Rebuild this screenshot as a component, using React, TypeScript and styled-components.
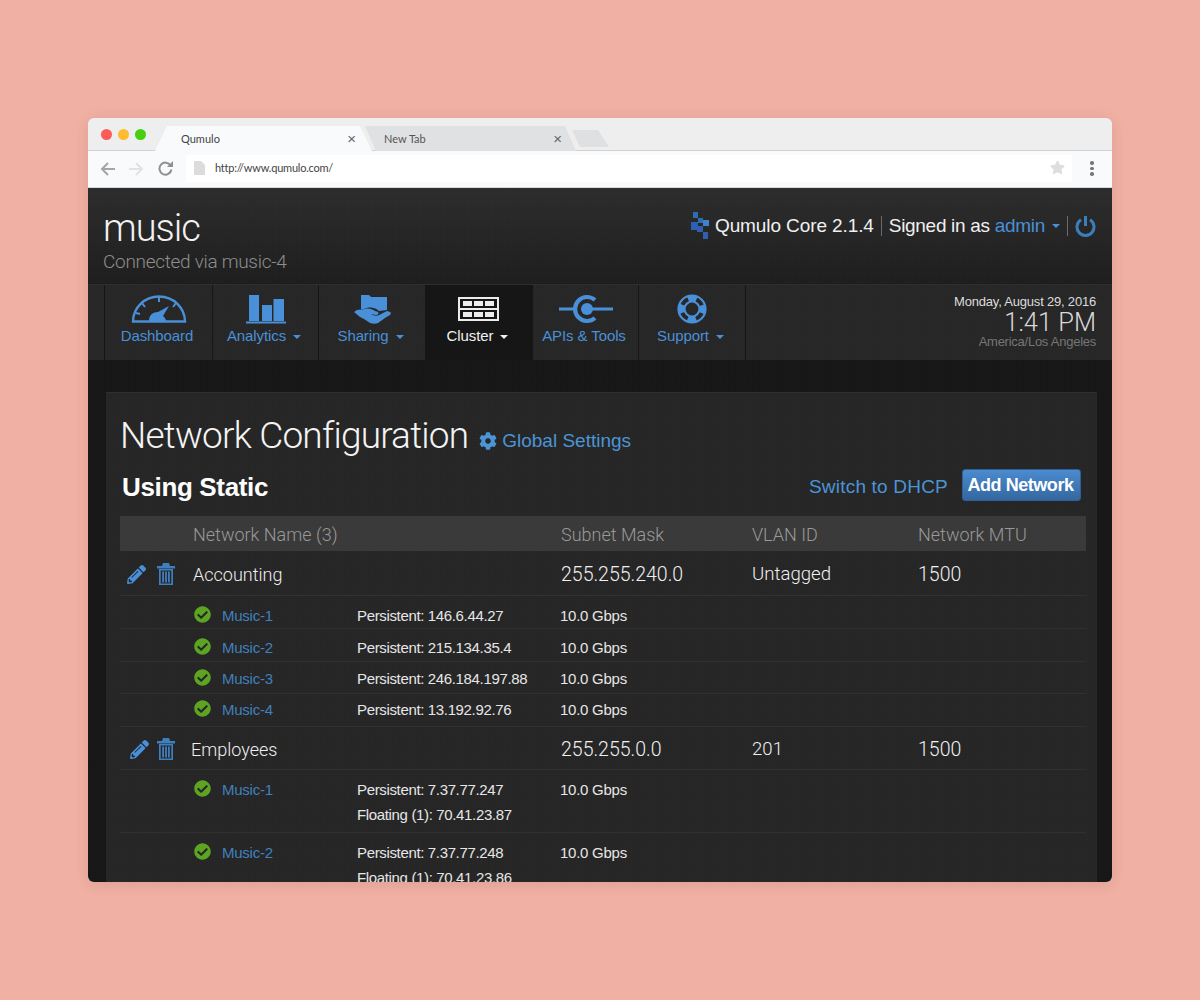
import React from "react";
import styled, { createGlobalStyle } from "styled-components";
import { FaCog, FaCheckCircle, FaPencilAlt, FaStar } from "react-icons/fa";

const Global = createGlobalStyle`
  html, body { margin: 0; height: 100%; background: #f0b0a3; }
  body { font-family: Roboto, "Liberation Sans", sans-serif; }
  * { box-sizing: border-box; }
`;

const BLUE = "#4a90d9";
const WEAVE = `repeating-linear-gradient(90deg, rgba(255,255,255,0.006) 0 1px, transparent 1px 3px), repeating-linear-gradient(0deg, rgba(0,0,0,0.025) 0 1px, transparent 1px 3px)`;

const Page = styled.div`
  height: 1000px;
  padding-top: 118px;
`;
const Window = styled.div`
  width: 1024px;
  height: 764px;
  margin: 0 auto;
  border-radius: 6px;
  overflow: hidden;
  display: flex;
  flex-direction: column;
  box-shadow: 0 2px 14px rgba(90, 40, 30, 0.12);
`;

/* Browser chrome */
const TabStrip = styled.div`
  height: 33px;
  flex: none;
  display: flex;
  align-items: flex-end;
  background: #eeeeee;
  border-bottom: 1px solid #d2d2d2;
  padding-left: 13px;
`;
const Lights = styled.div`
  display: flex;
  gap: 6px;
  align-self: flex-start;
  margin-top: 11px;
  margin-right: 9px;
`;
const Light = styled.span<{ $c: string }>`
  width: 11px;
  height: 11px;
  border-radius: 50%;
  background: ${(p) => p.$c};
`;
const ActiveTab = styled.div`
  position: relative;
  z-index: 1;
  width: 217px;
  height: 25px;
  margin-bottom: -1px;
  clip-path: polygon(0 100%, 12px 0, calc(100% - 12px) 0, 100% 100%);
  background: #f9fafc;
  display: flex;
  align-items: center;
  justify-content: space-between;
  padding: 0 16px 0 26px;
  font: 400 11px "Lato", sans-serif;
  color: #444;
`;
const InactiveTab = styled.div`
  width: 211px;
  height: 25px;
  margin-left: -7px;
  margin-bottom: -1px;
  clip-path: polygon(11px 100%, 0 0, calc(100% - 11px) 0, 100% 100%);
  background: #e0e1e3;
  display: flex;
  align-items: center;
  justify-content: space-between;
  padding: 0 14px 0 19px;
  font: 400 11px "Lato", sans-serif;
  color: #555;
`;
const TabClose = styled.span`
  font: 400 15px "Liberation Sans", sans-serif;
  color: #666;
  line-height: 1;
`;
const NewTab = styled.div`
  width: 37px;
  height: 17px;
  margin: 0 0 3px -4px;
  background: #dfe0e2;
  clip-path: polygon(0 0, 26px 0, 100% 100%, 8px 100%);
`;
const Toolbar = styled.div`
  height: 37px;
  flex: none;
  background: #f9fafc;
  border-bottom: 1px solid #d8d8d8;
  display: flex;
  align-items: center;
  padding: 0 0 1px 12px;
`;
const NavIcons = styled.div`
  display: flex;
  gap: 14px;
  width: 86px;
  align-items: center;
`;
const UrlBar = styled.div`
  width: 886px;
  height: 27px;
  background: #fff;
  display: flex;
  align-items: center;
  padding: 0 7px 2px 8px;
  font: 400 11px "Lato", sans-serif;
  letter-spacing: -0.22px;
  color: #444;
  gap: 10px;
`;
const UrlText = styled.span`
  flex: 1;
`;
const Menu = styled.div`
  margin-left: 18px;
  display: flex;
  flex-direction: column;
  gap: 2px;
`;
const MenuDot = styled.span`
  width: 3.5px;
  height: 3.5px;
  border-radius: 50%;
  background: #777;
`;

/* App header */
const App_ = styled.div`
  flex: 1;
  min-height: 0;
  background: ${WEAVE}, #171717;
  overflow: hidden;
`;
const Header = styled.div`
  height: 96px;
  padding: 19px 16px 0 15px;
  display: flex;
  justify-content: space-between;
  background: ${WEAVE}, linear-gradient(#2d2d2d, #1e1e1e);
`;
const ClusterName = styled.div`
  font-weight: 300;
  font-size: 38px;
  line-height: 42px;
  color: #f2f2f2;
  letter-spacing: -1px;
`;
const Connected = styled.div`
  font-weight: 300;
  font-size: 19px;
  line-height: 24px;
  margin-top: 1px;
  letter-spacing: -0.3px;
  color: #8e8e8e;
`;
const HeaderRight = styled.div`
  display: flex;
  align-items: center;
  height: 38px;
  font: 400 19px "Liberation Sans", sans-serif;
  letter-spacing: -0.1px;
  color: #f0f0f0;
`;
const SignedIn = styled.span`
  letter-spacing: -0.3px;
  white-space: pre;
`;
const Sep = styled.span`
  width: 1px;
  height: 20px;
  background: #6a6a6a;
  margin: 0 7px;
`;
const AdminLink = styled.span`
  color: ${BLUE};
`;
const Caret = styled.span<{ $c?: string }>`
  display: inline-block;
  width: 0;
  height: 0;
  margin-left: 7px;
  border-left: 4px solid transparent;
  border-right: 4px solid transparent;
  border-top: 4px solid ${(p) => p.$c ?? BLUE};
  vertical-align: middle;
`;

/* Main nav */
const NavBar = styled.div`
  height: 76px;
  background: ${WEAVE}, #272727;
  display: flex;
  padding-left: 16px;
  border-top: 1px solid #2e2e2e;
`;
const NavItem = styled.div<{ $w: number; $active?: boolean }>`
  width: ${(p) => p.$w}px;
  border-left: 1px solid #161616;
  background: ${(p) => (p.$active ? "#161616" : "transparent")};
  color: ${(p) => (p.$active ? "#f0f0f0" : BLUE)};
  display: flex;
  flex-direction: column;
  align-items: center;
  padding-top: 8px;
  font: 400 15px "Liberation Sans", sans-serif;
  letter-spacing: -0.1px;
`;
const NavIcon = styled.div`
  height: 32px;
  display: flex;
  align-items: center;
  justify-content: center;
`;
const NavLabel = styled.div`
  margin-top: 1px;
  margin-right: 3px;
  line-height: 20px;
  white-space: nowrap;
`;
const NavEnd = styled.div`
  border-left: 1px solid #161616;
`;
const Clock = styled.div`
  margin-left: auto;
  padding: 9px 16px 0 0;
  text-align: right;
  font-family: "Liberation Sans", sans-serif;
`;
const ClockDate = styled.div`
  font-size: 13px;
  line-height: 15px;
  letter-spacing: -0.2px;
  color: #dcdcdc;
`;
const ClockTime = styled.div`
  font: 300 25.5px/26px Roboto, sans-serif;
  color: #d8d8d8;
`;
const ClockZone = styled.div`
  font-size: 13px;
  line-height: 14px;
  letter-spacing: -0.25px;
  color: #767676;
`;

/* Content */
const Content = styled.div`
  padding: 32px 15px 0 18px;
`;
const Panel = styled.div`
  background: ${WEAVE}, #262626;
  border-top: 1px solid #2f2f2f;
  padding: 20px 11px 0 14px;
  height: 600px;
`;
const TitleRow = styled.div`
  display: flex;
  align-items: flex-start;
  gap: 11px;
  height: 46px;
`;
const Title = styled.h1`
  margin: 0;
  font-weight: 300;
  font-size: 37px;
  line-height: 46px;
  color: #f4f4f4;
  letter-spacing: -0.8px;
`;
const GlobalLink = styled.a`
  display: inline-flex;
  align-items: center;
  gap: 5px;
  margin-top: 17px;
  color: #4b94d6;
  font: 400 19px/22px "Liberation Sans", sans-serif;
`;
const ActionRow = styled.div`
  display: flex;
  align-items: center;
  margin-top: 10px;
  height: 32px;
  padding: 0 5px 0 2px;
`;
const Using = styled.h2`
  margin: 4px 0 0;
  flex: 1;
  font: 700 26px "Liberation Sans", sans-serif;
  letter-spacing: -0.35px;
  color: #fff;
`;
const SwitchLink = styled.a`
  color: #4b94d6;
  font: 400 19px "Liberation Sans", sans-serif;
  letter-spacing: 0.2px;
  margin: 4px 14px 0 0;
`;
const AddButton = styled.button`
  width: 119px;
  height: 32px;
  border: 1px solid #2f5f94;
  border-radius: 3px;
  background: linear-gradient(#4b8bd0, #33689f);
  color: #fff;
  padding: 0 2px 0 0;
  font: 700 18px "Liberation Sans", sans-serif;
  letter-spacing: -0.45px;
`;
const COLS = "73px 368px 191px 166px 1fr";
const HeadRow = styled.div`
  margin-top: 15px;
  height: 35px;
  padding-top: 2px;
  background: #3a3a3a;
  display: grid;
  grid-template-columns: ${COLS};
  align-items: center;
  font-weight: 300;
  font-size: 18px;
  color: #999;
`;
const NetRow = styled.div<{ $h: number }>`
  height: ${(p) => p.$h}px;
  padding-top: 2px;
  display: grid;
  grid-template-columns: ${COLS};
  align-items: center;
  font-weight: 300;
  font-size: 19.5px;
  color: #f0f0f0;
  border-bottom: 1px solid #313131;
`;
const RowActions = styled.div<{ $left: number; $gap: number }>`
  display: flex;
  align-items: center;
  gap: ${(p) => p.$gap}px;
  padding-left: ${(p) => p.$left}px;
`;
const NetName = styled.div<{ $shift?: number }>`
  margin-left: ${(p) => p.$shift ?? 0}px;
  font-size: 18px;
`;
const Vlan = styled.span`
  font-size: 18.6px;
`;
const SubRow = styled.div<{ $h: number; $pad: number }>`
  height: ${(p) => p.$h}px;
  display: grid;
  grid-template-columns: 73px 164px 203px 1fr;
  padding-top: ${(p) => p.$pad}px;
  font: 400 15px/25px "Liberation Sans", sans-serif;
  letter-spacing: -0.35px;
  color: #e6e6e6;
  border-bottom: 1px solid #303030;
`;
const NodeCell = styled.div`
  grid-column: 2;
  display: flex;
  align-items: flex-start;
  gap: 11px;
  padding-left: 1px;
`;
const StatusIcon = styled.div`
  height: 22px;
  display: flex;
  align-items: center;
  color: #5da423;
`;
const NodeLink = styled.a`
  color: #3f81bd;
  letter-spacing: -0.25px;
`;
const Speed = styled.div`
  letter-spacing: -0.25px;
`;

/* Drawn icons */
const Gauge = () => (
  <svg width="56" height="28" viewBox="0 0 56 28" fill="none">
    <path d="M2 26.5 A26 25 0 0 1 54 26.5 Z" stroke={BLUE} strokeWidth="2.4" />
    <path d="M28 2v5M11 8l3 4M45 8l-3 4M5 18l4 1" stroke={BLUE} strokeWidth="2" />
    <path d="M18 26c0-6 4-9 9-9l11-6-6 10c2 2 3 3 3 5z" fill={BLUE} />
  </svg>
);
const Bars = () => (
  <svg width="40" height="29" viewBox="0 0 40 29" fill={BLUE}>
    <rect x="3" y="0" width="10" height="26" />
    <rect x="16" y="10" width="10" height="16" />
    <rect x="27.5" y="4" width="10.5" height="22" />
    <rect x="0" y="26.5" width="40" height="2" />
  </svg>
);
const Sharing = () => (
  <svg width="37" height="29" viewBox="0 0 37 29" fill={BLUE}>
    <path d="M7 0h8l2 2h16v13l-8 1c-2-2-4-3-6-3-3-1-7 0-9 1l-3 0z" />
    <path d="M0 17l3-2 8-1c4-1 7 0 10 2l3 1c1 1 0 3-2 3l-5-1c3 2 6 2 8 1l8-4 3 1c1 0 1 2 0 3l-5 3-7 5c-2 1-5 1-8 0l-6-4-4-2z" />
  </svg>
);
const ClusterIcon = () => (
  <svg width="42" height="24" viewBox="0 0 42 24" fill="#ececec">
    <path fillRule="evenodd" d="M0 0h41v24H0zM2 2v9h37V2zM2 13v9h37v-9z" />
    <rect x="5" y="4" width="9" height="5" />
    <rect x="16" y="4" width="9" height="5" />
    <rect x="27" y="4" width="9" height="5" />
    <rect x="5" y="15" width="9" height="5" />
    <rect x="16" y="15" width="9" height="5" />
    <rect x="27" y="15" width="9" height="5" />
  </svg>
);
const Api = () => (
  <svg width="54" height="30" viewBox="0 0 54 30" fill="none">
    <path d="M0 15h18M28 15h26" stroke={BLUE} strokeWidth="3" />
    <path d="M36 6a12 12 0 1 0 0 18" stroke={BLUE} strokeWidth="4.2" />
    <circle cx="28" cy="15" r="6" fill={BLUE} />
  </svg>
);
const Buoy = () => (
  <svg width="30" height="30" viewBox="0 0 30 30" fill="none">
    <circle cx="15" cy="15" r="13.5" stroke={BLUE} strokeWidth="2.2" />
    <circle cx="15" cy="15" r="7.5" stroke={BLUE} strokeWidth="2.2" />
    <circle cx="15" cy="15" r="10.5" stroke={BLUE} strokeWidth="6" strokeDasharray="8.5 8" strokeDashoffset="4.25" />
  </svg>
);
const Logo = () => (
  <svg width="19" height="28" viewBox="0 0 19 28" style={{ marginRight: 5 }}>
    <path d="M2 0h5v6H2zM7 6h5v5H7z" fill="#2f6db3" />
    <path d="M0 10h7v8H0z" fill="#2c5fb5" />
    <path d="M12 8h6v6h-6z" fill="#3f83cc" />
    <path d="M6 14h6v6H6zM12 20h5v7h-5z" fill="#2f5fae" />
  </svg>
);
const Power = () => (
  <svg width="21" height="22" viewBox="0 0 21 22" fill="none">
    <path d="M6 4.8a8.5 8.5 0 1 0 9 0" stroke="#3a7fb8" strokeWidth="3" />
    <path d="M10.5 1v10" stroke="#3a7fb8" strokeWidth="3" />
  </svg>
);
const Trash = () => (
  <svg width="18" height="22" viewBox="0 0 18 22" fill="#3f7fbf">
    <path d="M6 0h6l1 3h5v2.4H0V3h5z" />
    <path fillRule="evenodd" d="M2 6h14v16H2zM3.7 7.5v13h10.6v-13z" />
    <path d="M5.2 8.5h1.8v11H5.2zM8.1 8.5h1.8v11H8.1zM11 8.5h1.8v11H11z" />
  </svg>
);
const Back = () => (
  <svg width="15" height="14" viewBox="0 0 15 14" fill="none" stroke="#a5a5a5" strokeWidth="2">
    <path d="M15 7H2M8 1 2 7l6 6" />
  </svg>
);
const Forward = () => (
  <svg width="15" height="14" viewBox="0 0 15 14" fill="none" stroke="#e2e2e2" strokeWidth="2">
    <path d="M0 7h13M7 1l6 6-6 6" />
  </svg>
);
const Reload = () => (
  <svg width="15" height="15" viewBox="0 0 15 15" fill="none">
    <path d="M12.6 4.5A6 6 0 1 0 13.4 8.5" stroke="#909090" strokeWidth="2" />
    <path d="M9 6h6V0z" fill="#909090" />
  </svg>
);
const PageIcon = () => (
  <svg width="11" height="14" viewBox="0 0 11 14" fill="#dcdcdc">
    <path d="M0 0h7l4 4v10H0z" />
  </svg>
);

const navItems = [
  { label: "Dashboard", w: 108, icon: <Gauge /> },
  { label: "Analytics", w: 106, caret: true, icon: <Bars /> },
  { label: "Sharing", w: 107, caret: true, icon: <Sharing /> },
  { label: "Cluster", w: 107, caret: true, active: true, icon: <ClusterIcon /> },
  { label: "APIs & Tools", w: 106, icon: <Api /> },
  { label: "Support", w: 107, caret: true, icon: <Buoy /> },
];

type Node = { name: string; ips: string[]; h: number; pad: number };
const nets: {
  name: string;
  mask: string;
  vlan: string;
  h: number;
  left: number;
  gap: number;
  nameShift: number;
  nodes: Node[];
}[] = [
  {
    name: "Accounting",
    mask: "255.255.240.0",
    vlan: "Untagged",
    h: 45,
    left: 7,
    gap: 11,
    nameShift: 0,
    nodes: [
      { name: "Music-1", ips: ["Persistent: 146.6.44.27"], h: 33, pad: 7 },
      { name: "Music-2", ips: ["Persistent: 215.134.35.4"], h: 33, pad: 6 },
      { name: "Music-3", ips: ["Persistent: 246.184.197.88"], h: 32, pad: 4 },
      { name: "Music-4", ips: ["Persistent: 13.192.92.76"], h: 33, pad: 3 },
    ],
  },
  {
    name: "Employees",
    mask: "255.255.0.0",
    vlan: "201",
    h: 43,
    left: 10,
    gap: 8,
    nameShift: -2,
    nodes: [
      { name: "Music-1", ips: ["Persistent: 7.37.77.247", "Floating (1): 70.41.23.87"], h: 63, pad: 7 },
      { name: "Music-2", ips: ["Persistent: 7.37.77.248", "Floating (1): 70.41.23.86"], h: 63, pad: 7 },
    ],
  },
];

export default function App() {
  return (
    <Page>
      <Global />
      <Window>
        <TabStrip>
          <Lights>
            <Light $c="#fc5b57" />
            <Light $c="#febc2e" />
            <Light $c="#47cf10" />
          </Lights>
          <ActiveTab>
            Qumulo<TabClose>×</TabClose>
          </ActiveTab>
          <InactiveTab>
            New Tab<TabClose>×</TabClose>
          </InactiveTab>
          <NewTab />
        </TabStrip>
        <Toolbar>
          <NavIcons>
            <Back />
            <Forward />
            <Reload />
          </NavIcons>
          <UrlBar>
            <PageIcon />
            <UrlText>http://www.qumulo.com/</UrlText>
            <FaStar size={15} color="#dedede" />
          </UrlBar>
          <Menu>
            <MenuDot />
            <MenuDot />
            <MenuDot />
          </Menu>
        </Toolbar>
        <App_>
          <Header>
            <div>
              <ClusterName>music</ClusterName>
              <Connected>Connected via music-4</Connected>
            </div>
            <HeaderRight>
              <Logo />
              Qumulo Core 2.1.4
              <Sep />
              <SignedIn>
                {"Signed in as "}
                <AdminLink>admin</AdminLink>
              </SignedIn>
              <Caret />
              <Sep />
              <Power />
            </HeaderRight>
          </Header>
          <NavBar>
            {navItems.map((n) => (
              <NavItem key={n.label} $w={n.w} $active={n.active}>
                <NavIcon>{n.icon}</NavIcon>
                <NavLabel>
                  {n.label}
                  {n.caret && <Caret $c={n.active ? "#f0f0f0" : BLUE} />}
                </NavLabel>
              </NavItem>
            ))}
            <NavEnd />
            <Clock>
              <ClockDate>Monday, August 29, 2016</ClockDate>
              <ClockTime>1:41 PM</ClockTime>
              <ClockZone>America/Los Angeles</ClockZone>
            </Clock>
          </NavBar>
          <Content>
            <Panel>
              <TitleRow>
                <Title>Network Configuration</Title>
                <GlobalLink>
                  <FaCog size={18} />
                  Global Settings
                </GlobalLink>
              </TitleRow>
              <ActionRow>
                <Using>Using Static</Using>
                <SwitchLink>Switch to DHCP</SwitchLink>
                <AddButton>Add Network</AddButton>
              </ActionRow>
              <HeadRow>
                <span />
                <span>Network Name (3)</span>
                <span>Subnet Mask</span>
                <span>VLAN ID</span>
                <span>Network MTU</span>
              </HeadRow>
              {nets.map((net) => (
                <React.Fragment key={net.name}>
                  <NetRow $h={net.h}>
                    <RowActions $left={net.left} $gap={net.gap}>
                      <FaPencilAlt size={19} color="#4a90d9" />
                      <Trash />
                    </RowActions>
                    <NetName $shift={net.nameShift}>{net.name}</NetName>
                    <span>{net.mask}</span>
                    <Vlan>{net.vlan}</Vlan>
                    <span>1500</span>
                  </NetRow>
                  {net.nodes.map((node) => (
                    <SubRow key={node.name} $h={node.h} $pad={node.pad}>
                      <NodeCell>
                        <StatusIcon>
                          <FaCheckCircle size={17} />
                        </StatusIcon>
                        <NodeLink>{node.name}</NodeLink>
                      </NodeCell>
                      <div>
                        {node.ips.map((ip) => (
                          <div key={ip}>{ip}</div>
                        ))}
                      </div>
                      <Speed>10.0 Gbps</Speed>
                    </SubRow>
                  ))}
                </React.Fragment>
              ))}
            </Panel>
          </Content>
        </App_>
      </Window>
    </Page>
  );
}
